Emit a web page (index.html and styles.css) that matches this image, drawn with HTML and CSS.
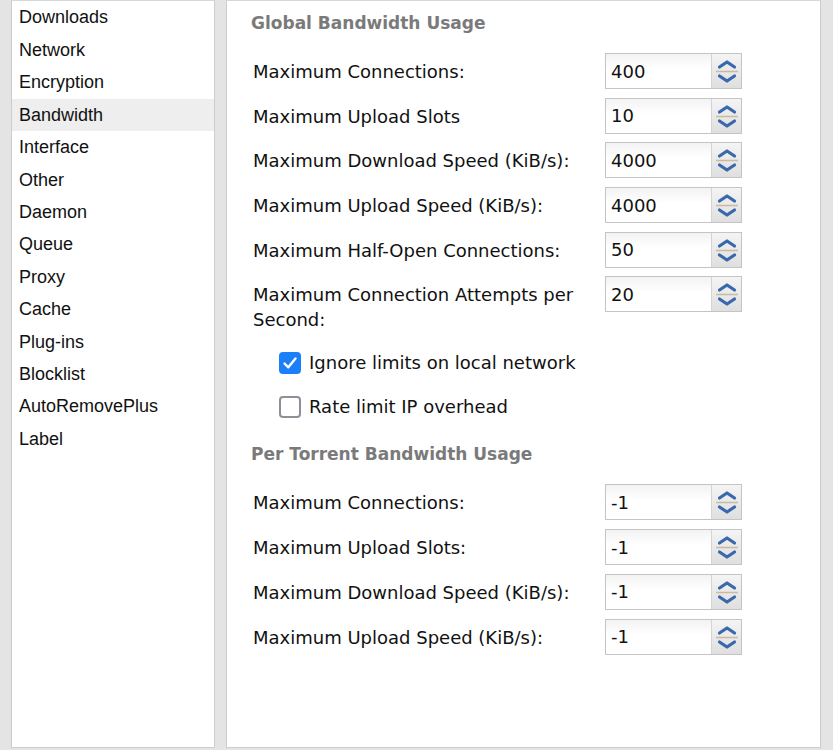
FILE: index.html
```html
<!DOCTYPE html>
<html lang="en">
<head>
  <meta charset="UTF-8" />
  <title>Preferences - Bandwidth</title>
  <link rel="stylesheet" href="styles.css">
</head>
<body>
  <div class="window">
    <ul class="sidebar">
      <li>Downloads</li>
      <li>Network</li>
      <li>Encryption</li>
      <li class="active">Bandwidth</li>
      <li>Interface</li>
      <li>Other</li>
      <li>Daemon</li>
      <li>Queue</li>
      <li>Proxy</li>
      <li>Cache</li>
      <li>Plug-ins</li>
      <li>Blocklist</li>
      <li>AutoRemovePlus</li>
      <li>Label</li>
    </ul>

    <div class="content">
      <h2>Global Bandwidth Usage</h2>
      <div class="rows">
        <div class="row">
          <label>Maximum Connections:</label>
          <div class="spin"><input type="text" value="400" /><span class="arrows"></span></div>
        </div>
        <div class="row">
          <label>Maximum Upload Slots</label>
          <div class="spin"><input type="text" value="10" /><span class="arrows"></span></div>
        </div>
        <div class="row">
          <label>Maximum Download Speed (KiB/s):</label>
          <div class="spin"><input type="text" value="4000" /><span class="arrows"></span></div>
        </div>
        <div class="row">
          <label>Maximum Upload Speed (KiB/s):</label>
          <div class="spin"><input type="text" value="4000" /><span class="arrows"></span></div>
        </div>
        <div class="row">
          <label>Maximum Half-Open Connections:</label>
          <div class="spin"><input type="text" value="50" /><span class="arrows"></span></div>
        </div>
        <div class="row">
          <label>Maximum Connection Attempts per Second:</label>
          <div class="spin"><input type="text" value="20" /><span class="arrows"></span></div>
        </div>
      </div>

      <div class="checks">
        <label class="check"><span class="box on"></span>Ignore limits on local network</label>
        <label class="check"><span class="box"></span>Rate limit IP overhead</label>
      </div>

      <h2>Per Torrent Bandwidth Usage</h2>
      <div class="rows">
        <div class="row">
          <label>Maximum Connections:</label>
          <div class="spin"><input type="text" value="-1" /><span class="arrows"></span></div>
        </div>
        <div class="row">
          <label>Maximum Upload Slots:</label>
          <div class="spin"><input type="text" value="-1" /><span class="arrows"></span></div>
        </div>
        <div class="row">
          <label>Maximum Download Speed (KiB/s):</label>
          <div class="spin"><input type="text" value="-1" /><span class="arrows"></span></div>
        </div>
        <div class="row">
          <label>Maximum Upload Speed (KiB/s):</label>
          <div class="spin"><input type="text" value="-1" /><span class="arrows"></span></div>
        </div>
      </div>
    </div>
  </div>

  <script>
    // spinner arrows are the same everywhere, so fill them in once
    const arrowSvg = `
      <svg width="28" height="34" viewBox="0 0 28 34">
        <path d="M6.5 13 L14 8 L21.5 13" fill="none" stroke="#3a68ac" stroke-width="3.2" stroke-linecap="round" stroke-linejoin="round"/>
        <line x1="3" y1="17.5" x2="25" y2="17.5" stroke="#c9bb9c" stroke-width="1.5"/>
        <path d="M6.5 22 L14 27 L21.5 22" fill="none" stroke="#3a68ac" stroke-width="3.2" stroke-linecap="round" stroke-linejoin="round"/>
      </svg>`;
    document.querySelectorAll('.arrows').forEach(el => el.innerHTML = arrowSvg);

    document.querySelectorAll('.box').forEach(el => {
      el.innerHTML = `<svg width="22" height="22" viewBox="0 0 22 22">
        <path d="M5.5 11.5 L9.3 15.3 L16.5 6.5" fill="none" stroke="#fff" stroke-width="2.4" stroke-linecap="round" stroke-linejoin="round"/>
      </svg>`;
    });
  </script>
</body>
</html>
```

FILE: styles.css
```css
html, body {
  margin: 0;
  height: 100%;
}

body {
  background: #e4e4e4;
  color: #111;
  overflow: hidden;
}

.window {
  display: flex;
  gap: 11px;
  height: 750px;
  padding: 0 12px 2px 11px;
  box-sizing: border-box;
}

.sidebar {
  width: 204px;
  margin: 0;
  padding: 0;
  list-style: none;
  background: #fff;
  border: 1px solid #cdcdcd;
  border-top-color: #d8d8d8;
  box-sizing: border-box;
  font-family: "Liberation Sans", Arial, sans-serif;
  font-size: 18px;
}

.sidebar li {
  height: 32.4px;
  line-height: 32.4px;
  padding-left: 7px;
}

.sidebar li:first-child {
  height: 33px;
  line-height: 33px;
}

.sidebar li.active {
  background: #eeeeee;
}

.content {
  flex: 1;
  background: #fff;
  border: 1px solid #cdcdcd;
  border-top-color: #d8d8d8;
  box-sizing: border-box;
  padding: 9px 0 0 24px;
  font-family: "DejaVu Sans", Verdana, sans-serif;
  font-size: 18px;
}

h2 {
  margin: 0;
  font-size: 17px;
  font-weight: bold;
  color: #7a7a7a;
  line-height: 26px;
}

.rows {
  display: flex;
  flex-direction: column;
  gap: 8.7px;
  margin-top: 17px;
  padding-left: 2px;
}

.row {
  display: flex;
  align-items: flex-start;
}

.row label {
  width: 352px;
  line-height: 25px;
  padding-top: 6px;
}

.spin {
  display: flex;
  width: 137px;
  height: 36px;
  border: 1px solid #c4c4c4;
  box-sizing: border-box;
}

.spin input {
  width: 106px;
  border: none;
  border-right: 1px solid #d4d4d4;
  padding: 0 0 0 5px;
  margin: 0;
  box-sizing: border-box;
  font-family: "DejaVu Sans", Verdana, sans-serif;
  font-size: 18px;
  color: #111;
  background: linear-gradient(#f3f3f3, #ffffff 45%);
  outline: none;
}

.arrows {
  flex: 1;
  display: flex;
  align-items: center;
  justify-content: center;
  background: linear-gradient(#f4f4f4, #dfdfdf);
}

.arrows svg {
  display: block;
}

.checks {
  display: flex;
  flex-direction: column;
  gap: 22px;
  margin: 20px 0 0 28px;
}

.check {
  display: flex;
  align-items: center;
  gap: 8px;
  line-height: 22px;
}

.box {
  width: 22px;
  height: 22px;
  border-radius: 4px;
  border: 2px solid #8f8f98;
  box-sizing: border-box;
  background: #fff;
}

.box svg {
  display: none;
}

.box.on {
  border: none;
  background: #1a7ff9;
}

.box.on svg {
  display: block;
}

.checks + h2 {
  margin-top: 23px;
}
```
